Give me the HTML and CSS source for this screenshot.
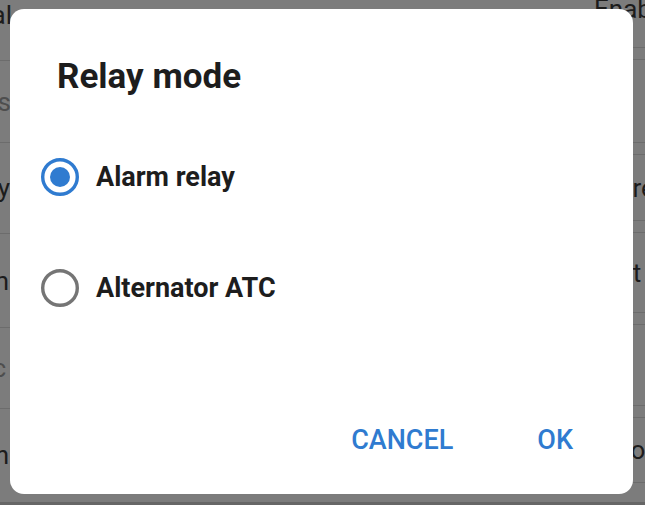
FILE: index.html
```html
<!DOCTYPE html>
<html>
<head>
  <title>Relay mode</title>
  <link rel="stylesheet" href="styles.css">
</head>
<body>
  <div class="screen">
    <div class="list list-left">
      <div class="row row1"><span class="cut cut-12">Normal</span></div>
      <div class="row row2"><span class="cut cut-11 muted">Alarms</span></div>
      <div class="row row3"><span class="cut cut-10">Relay</span></div>
      <div class="row row4"><span class="cut cut-9">Alarm</span></div>
      <div class="row row5"><span class="cut cut-6 muted">c</span></div>
      <div class="row row6"><span class="cut cut-9">h</span></div>
    </div>
    <div class="list list-right">
      <div class="rrow r1"><span>Enab</span></div>
      <div class="strip"></div>
      <div class="rrow r2"></div>
      <div class="strip"></div>
      <div class="rrow r3"><span>Store</span></div>
      <div class="strip"></div>
      <div class="rrow r4"><span>Batt</span></div>
      <div class="strip"></div>
      <div class="rrow r5"></div>
      <div class="strip"></div>
      <div class="rrow r6"><span>Solo</span></div>
    </div>
  </div>

  <div class="dialog">
    <h2 class="dialog-title">Relay mode</h2>
    <div class="options">
      <label class="option">
        <svg class="radio" width="40" height="40" viewBox="0 0 40 40">
          <circle cx="20" cy="20" r="17.3" fill="none" stroke="#2f7bd0" stroke-width="3.4"/>
          <circle cx="20" cy="20" r="10" fill="#2f7bd0"/>
        </svg>
        <span class="option-label">Alarm relay</span>
      </label>
      <label class="option">
        <svg class="radio" width="40" height="40" viewBox="0 0 40 40">
          <circle cx="20" cy="20" r="17.3" fill="none" stroke="#757575" stroke-width="3.4"/>
        </svg>
        <span class="option-label">Alternator ATC</span>
      </label>
    </div>
    <div class="actions">
      <button class="btn">CANCEL</button>
      <button class="btn">OK</button>
    </div>
  </div>
</body>
</html>
```

FILE: styles.css
```css
* {
  margin: 0;
  padding: 0;
  box-sizing: border-box;
}

body {
  width: 645px;
  height: 505px;
  overflow: hidden;
  background-color: #7c7c7c;
  font-family: Roboto, "Liberation Sans", sans-serif;
  position: relative;
}

/* page behind the dialog, dimmed */
.screen {
  display: grid;
  grid-template-columns: 320px 1fr;
  height: 505px;
  border-bottom: 3px solid #666666;
}

.list {
  display: flex;
  flex-direction: column;
  font-size: 26px;
  color: #1c1c1c;
}

.list-left {
  margin-top: -30px;
}

.row {
  display: flex;
  align-items: center;
  border-bottom: 1px solid #6c6c6c;
  overflow: hidden;
}

.row1 { height: 91px; }
.row2 { height: 82px; }
.row3 { height: 91px; }
.row4 { height: 94px; }
.row5 { height: 81px; }
.row6 { height: 92px; border-bottom: none; }

.cut {
  display: flex;
  justify-content: flex-end;
  overflow: hidden;
  white-space: nowrap;
}

.cut-12 { width: 12px; }
.cut-11 { width: 11px; }
.cut-10 { width: 10px; }
.cut-9 { width: 9px; }
.cut-6 { width: 6px; }

.muted {
  color: #4e4e4e;
}

.list-right {
  margin-top: -30px;
}

.rrow {
  display: flex;
  align-items: center;
  padding-left: 274px;
  white-space: nowrap;
}

.r1 { height: 77px; }
.r2 { height: 82px; }
.r3 { height: 65px; }
.r4 { height: 79px; }
.r5 { height: 80px; }
.r6 { height: 65px; border-bottom: 1px solid #6c6c6c; }

.strip {
  height: 13px;
  border-top: 1px solid #6c6c6c;
  border-bottom: 1px solid #6c6c6c;
}

/* dialog */
.dialog {
  position: absolute;
  top: 9px;
  left: 10px;
  width: 623px;
  height: 485px;
  background-color: #ffffff;
  border-radius: 14px;
  display: flex;
  flex-direction: column;
}

.dialog-title {
  font-size: 35px;
  font-weight: 700;
  line-height: 40px;
  color: #1d1d1d;
  padding: 48px 0 0 47px;
}

.options {
  display: flex;
  flex-direction: column;
  margin-top: 24px;
  padding-left: 30px;
}

.option {
  display: flex;
  align-items: center;
  height: 111px;
}

.radio {
  display: block;
  flex-shrink: 0;
}

.option-label {
  margin-left: 16px;
  font-size: 27px;
  font-weight: 700;
  color: #1d1d1d;
}

.actions {
  display: flex;
  justify-content: flex-end;
  gap: 84px;
  margin-top: auto;
  padding: 0 60px 38px 0;
}

.btn {
  background: none;
  border: none;
  font-family: Roboto, "Liberation Sans", sans-serif;
  font-size: 27px;
  font-weight: 500;
  color: #2f7bd0;
  line-height: 32px;
}
```
